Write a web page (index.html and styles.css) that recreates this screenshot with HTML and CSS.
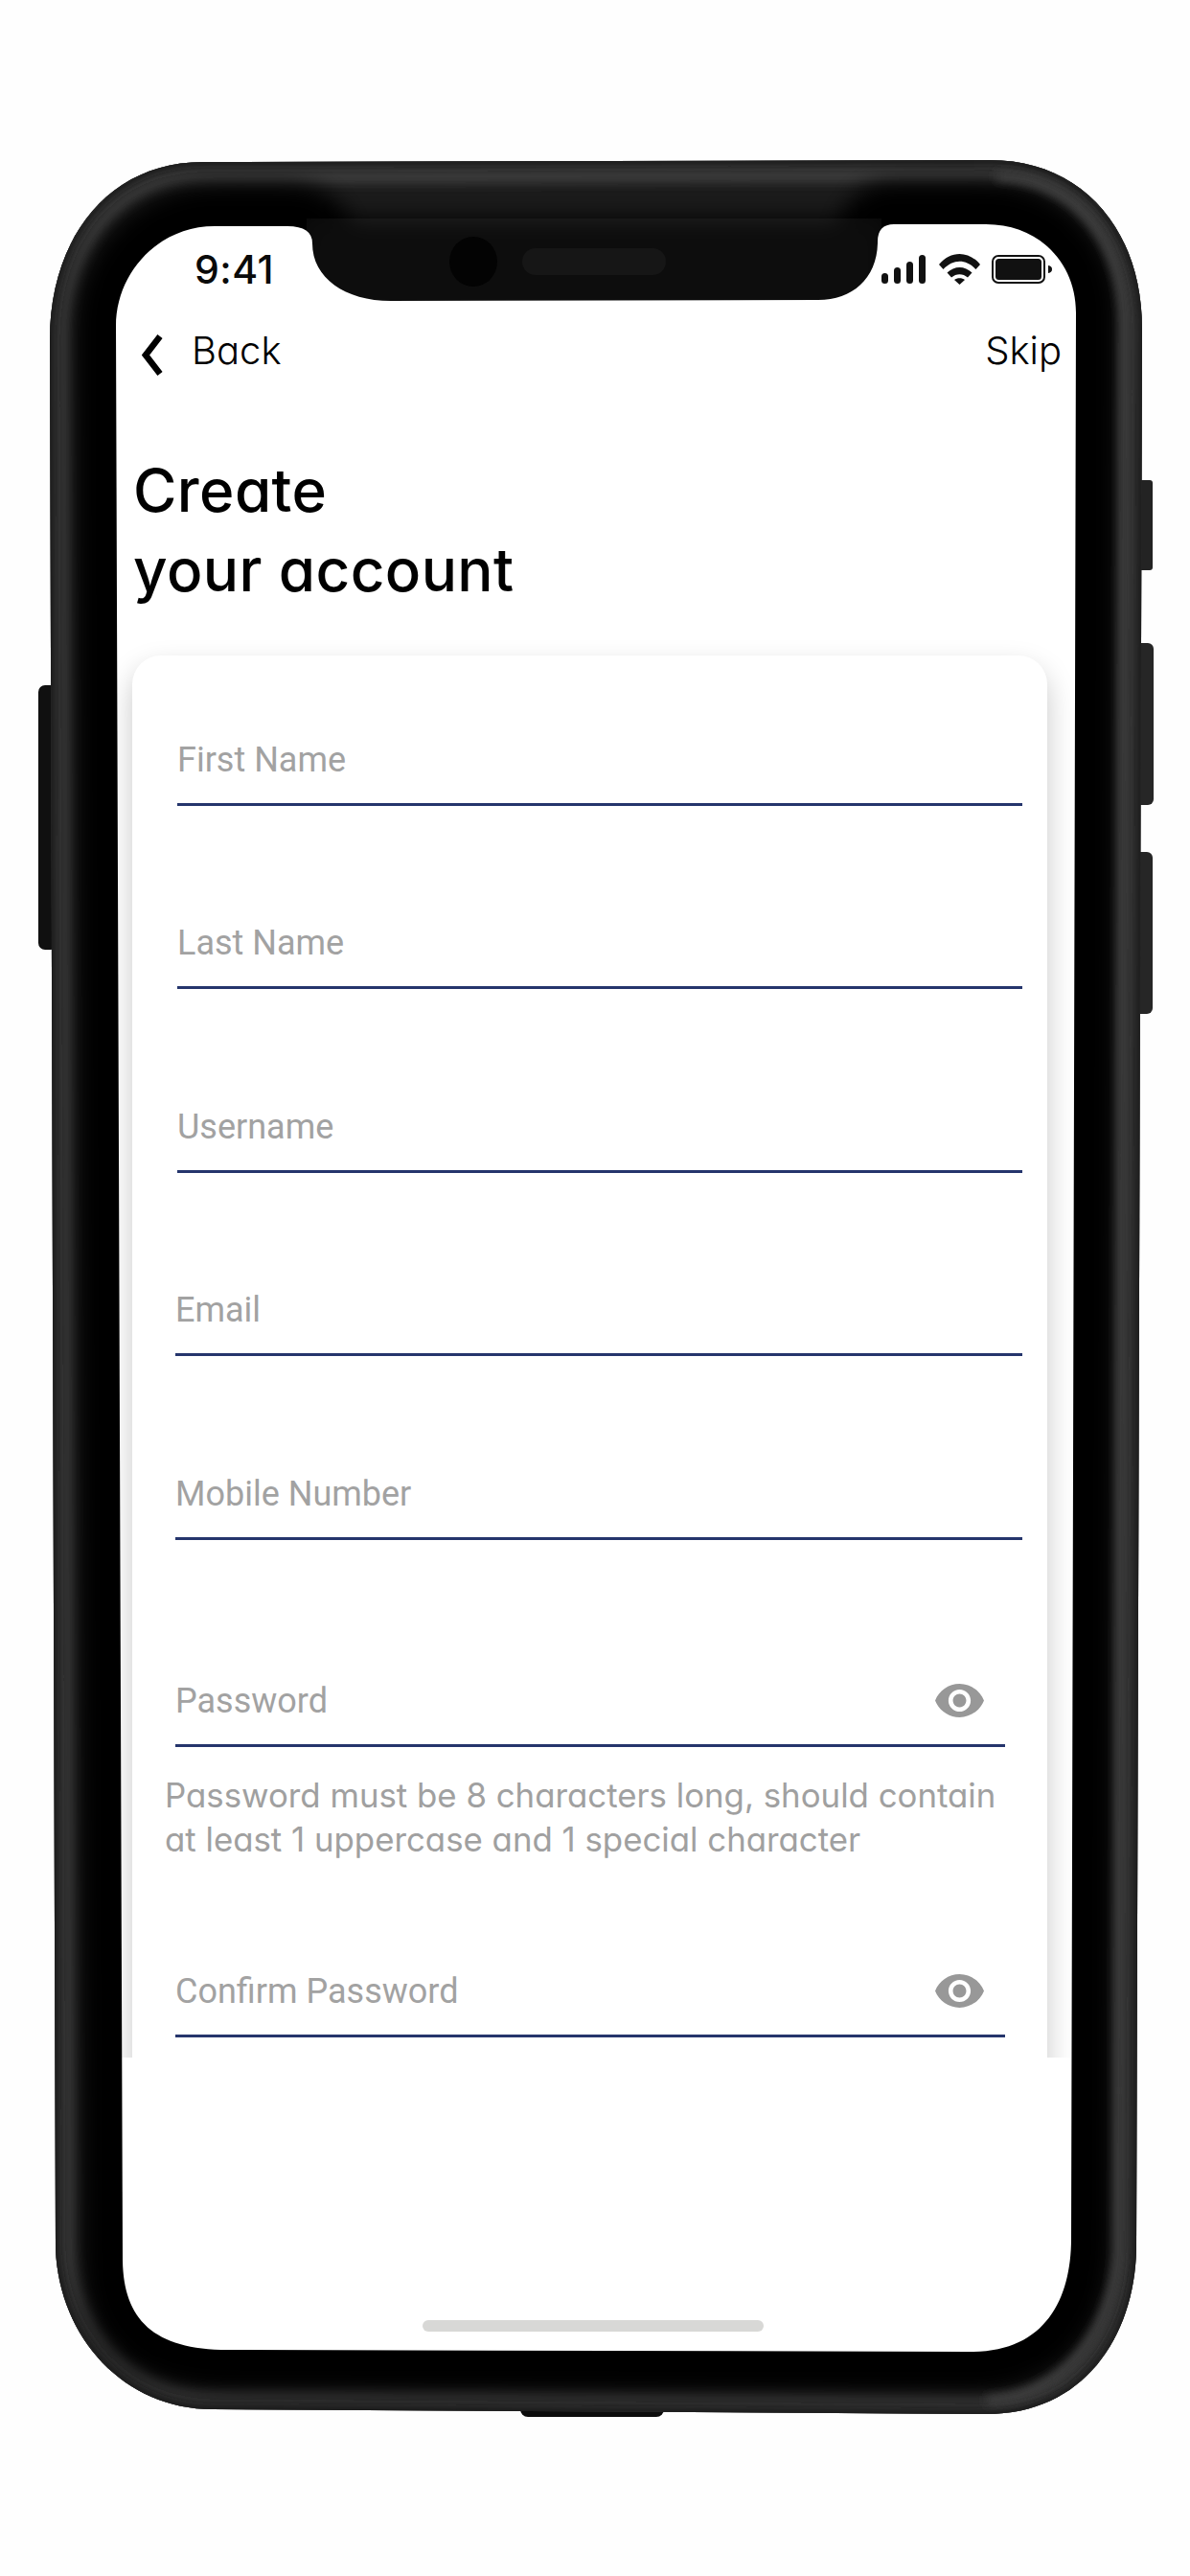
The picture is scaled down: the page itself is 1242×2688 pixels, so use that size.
FILE: index.html
```html
<!DOCTYPE html>
<html lang="en">
<head>
<meta charset="utf-8">
<title>Create your account</title>
<link rel="stylesheet" href="styles.css">
</head>
<body>
<div class="phone">
  <svg class="shell" viewBox="0 0 1242 2688" width="1242" height="2688" aria-hidden="true">
    <defs>
      <path id="outer" d="M212 169 L1033 167 C1130 167 1192 240 1192 343 L1186 2347 C1184 2440 1130 2519 1030 2519 L222 2514 C130 2514 62 2440 58 2347 L52 354 C52 250 112 169 212 169 Z"/>
      <path id="inner" d="M224 236 L300 236 Q326 236 326 254 C326 290 360 314 408 314 L854 313 C890 313 916 290 916 252 Q916 234 933 234 L1029 234 C1085 234 1123 275 1123 326 L1118 2336 C1118 2400 1090 2454 1014 2454 L238 2452 C160 2452 129 2420 128 2359 L121 340 C121 285 165 236 224 236 Z"/>
      <clipPath id="outerClip"><use href="#outer"/></clipPath>
      <filter id="blurWide" x="-10%" y="-10%" width="120%" height="120%"><feGaussianBlur stdDeviation="11"/></filter>
      <filter id="blurThin" x="-10%" y="-10%" width="120%" height="120%"><feGaussianBlur stdDeviation="5"/></filter>
      <filter id="blurNotch" x="-10%" y="-30%" width="120%" height="160%"><feGaussianBlur stdDeviation="12"/></filter>
    </defs>
    <rect x="1186" y="501" width="17" height="94" rx="3" fill="#232323"/>
    <rect x="1184" y="671" width="20" height="169" rx="6" fill="#262626"/>
    <rect x="1184" y="889" width="19" height="169" rx="6" fill="#262626"/>
    <rect x="40" y="715" width="20" height="276" rx="7" fill="#101010"/>
    <rect x="543" y="2505" width="150" height="17" rx="8" fill="#0c0c0c"/>
    <use href="#outer" fill="#1b1b1b"/>
    <g clip-path="url(#outerClip)">
      <use href="#outer" fill="none" stroke="#383838" stroke-width="48" filter="url(#blurThin)"/>
      <use href="#outer" fill="none" stroke="#1b1b1b" stroke-width="12" filter="url(#blurThin)"/>
      <use href="#inner" fill="none" stroke="#000" stroke-width="86" filter="url(#blurWide)"/>
      <path d="M1040 184 C1120 184 1174 250 1173 340 L1167 2350 C1162 2430 1110 2502 1030 2505" fill="none" stroke="#3c3c3c" stroke-width="10" filter="url(#blurThin)"/>
      <rect x="320" y="228" width="600" height="100" fill="#0a0a0a" filter="url(#blurNotch)"/>
    </g>
    <use href="#inner" fill="#fff"/>
    <ellipse cx="494" cy="273" rx="25" ry="26" fill="#030303"/>
    <rect x="545" y="259" width="150" height="28" rx="14" fill="#161616"/>
  </svg>
  <div class="screen">
    <div class="status">
      <span class="time">9:41</span>
      <svg class="signal" viewBox="0 0 46 30" width="46" height="30" aria-hidden="true">
        <rect x="0" y="19" width="7" height="11" rx="3.5"/>
        <rect x="13" y="13" width="7" height="17" rx="3.5"/>
        <rect x="26" y="7" width="7" height="23" rx="3.5"/>
        <rect x="39" y="0" width="7" height="30" rx="3.5"/>
      </svg>
      <svg class="wifi" viewBox="0 0 43 32" width="43" height="32" aria-hidden="true">
        <path d="M0 11 C12 -3.6 31 -3.6 43 11 L38.5 16 C28 5 15 5 4.5 16 Z"/>
        <path d="M8.5 19.5 C16 12 27 12 34.5 19.5 L30 24.5 C25 20 18 20 13 24.5 Z"/>
        <path d="M16 27 C19 24.5 24 24.5 27 27 L21.5 32 Z"/>
      </svg>
      <svg class="battery" viewBox="0 0 63 30" width="63" height="30" aria-hidden="true">
        <rect class="battery-case" x="1" y="1" width="54" height="28" rx="6"/>
        <rect x="4" y="4" width="48" height="22" rx="3.5"/>
        <path d="M59 11 C62 11.5 63 13 63 15 C63 17 62 18.500 59 19 Z"/>
      </svg>
    </div>
    <div class="nav">
      <svg class="chevron" viewBox="0 0 22 43" width="22" height="43" aria-hidden="true">
        <path d="M19 2 L4 21.500 L19 41"/>
      </svg>
      <span class="nav-link back">Back</span>
      <span class="nav-link skip">Skip</span>
    </div>
    <h1 class="title">Create<br>your account</h1>
    <div class="card-clip">
      <div class="card">
        <div class="field field-a"><span class="label">First Name</span></div>
        <div class="field field-a"><span class="label">Last Name</span></div>
        <div class="field field-a"><span class="label">Username</span></div>
        <div class="field field-b"><span class="label">Email</span></div>
        <div class="field field-b"><span class="label">Mobile Number</span></div>
        <div class="field field-pw field-pw-first">
          <span class="label">Password</span>
          <svg class="eye" viewBox="1 4.500 22 15" width="51" height="35" aria-hidden="true"><path d="M12 4.500C7 4.500 2.730 7.610 1 12c1.730 4.390 6 7.500 11 7.500s9.270-3.110 11-7.500c-1.730-4.390-6-7.500-11-7.500zM12 17c-2.760 0-5-2.240-5-5s2.240-5 5-5 5 2.240 5 5-2.240 5-5 5zm0-8c-1.660 0-3 1.340-3 3s1.340 3 3 3 3-1.340 3-3-1.340-3-3-3z"/></svg>
        </div>
        <p class="hint">Password must be 8 characters long, should contain<br>at least 1 uppercase and 1 special character</p>
        <div class="field field-pw field-pw-confirm">
          <span class="label">Confirm Password</span>
          <svg class="eye" viewBox="1 4.500 22 15" width="51" height="35" aria-hidden="true"><path d="M12 4.500C7 4.500 2.730 7.610 1 12c1.730 4.390 6 7.500 11 7.500s9.270-3.110 11-7.500c-1.730-4.390-6-7.500-11-7.500zM12 17c-2.760 0-5-2.240-5-5s2.240-5 5-5 5 2.240 5 5-2.240 5-5 5zm0-8c-1.660 0-3 1.340-3 3s1.340 3 3 3 3-1.340 3-3-1.340-3-3-3z"/></svg>
        </div>
      </div>
    </div>
    <div class="home-bar"></div>
  </div>
</div>
</body>
</html>
```
FILE: styles.css
```css
* { box-sizing: border-box; }
html, body { margin: 0; padding: 0; background: #fefefe; }
body { width: 1242px; height: 2688px; overflow: hidden; font-family: Inter, "Liberation Sans", sans-serif; color: #000; }

.phone { position: relative; width: 1242px; height: 2688px; padding-top: 265px; }
.shell { position: absolute; left: 0; top: 0; display: block; }

.screen { position: relative; margin-left: 121px; width: 1002px; font-feature-settings: "cv11" 1; }

.status { display: flex; align-items: center; height: 32px; padding-left: 82px; }
.time { font-size: 41px; line-height: 32px; font-weight: 500; width: 717px; color: #0a0a0a; letter-spacing: 0.5px; }
.signal, .wifi, .battery { display: block; flex: none; fill: #111; }
.wifi { margin-left: 14px; }
.battery { margin-left: 12px; }
.battery-case { fill: none; stroke: #111; stroke-width: 2; }

.nav { display: flex; align-items: center; height: 60px; margin-top: 43px; padding: 0 15px 0 27px; }
.chevron { flex: none; fill: none; stroke: #000; stroke-width: 6.500; }
.nav-link { font-size: 40px; line-height: 60px; font-weight: 300; position: relative; top: -4px; }
.back { margin-left: 30px; }
.skip { margin-left: auto; }

.title { margin: 70px 0 0 18px; font-size: 62px; line-height: 83px; font-weight: 550; letter-spacing: 0.4px; }

.card-clip { margin-top: 14px; height: 1497px; overflow: hidden; clip-path: polygon(1px 0, 1002px 0, 997.400px 100%, 6.300px 100%); }
.card { margin: 34px 0 0 17px; width: 955px; height: 1600px; padding-top: 86.500px; background: #fff; border-radius: 30px 30px 0 0; box-shadow: 0 14px 30px rgba(0, 0, 0, 0.22); }

.field { display: flex; align-items: center; height: 70px; padding-bottom: 23px; border-bottom: 3px solid #25356c; margin-right: 26px; }
.field + .field { margin-top: 121.500px; }
.field-a { margin-left: 47px; }
.field-b { margin-left: 45px; }
.field-pw { margin-left: 45px; margin-right: 44px; padding-right: 22px; justify-content: space-between; }
.field + .field.field-pw-first { margin-top: 146px; }
.field-pw-confirm { margin-top: 114px; }
.label { font-family: Roboto, "Liberation Sans", sans-serif; font-size: 36px; line-height: 42px; color: #a2a2a2; }
.eye { display: block; flex: none; fill: #989898; }

.hint { margin: 27px 0 0 34px; font-size: 34.800px; line-height: 46px; color: #a0a0a0; }

.home-bar { margin: 274px 0 0 320px; width: 356px; height: 12px; border-radius: 6px; background: #d8d8d6; }
```
